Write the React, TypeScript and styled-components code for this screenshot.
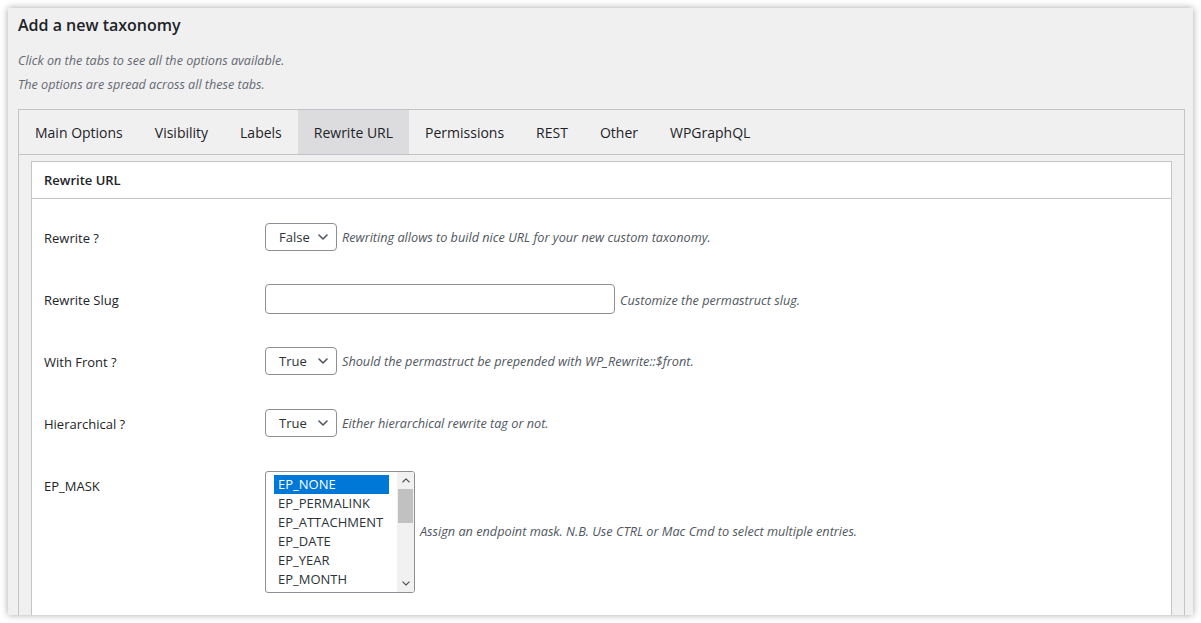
import React from "react";
import styled, { createGlobalStyle } from "styled-components";

const Global = createGlobalStyle`
  html, body { margin: 0; padding: 0; background: #ffffff; }
  body { font-family: "Open Sans", "Noto Sans", Arial, sans-serif; color: #1d2327; }
  * { box-sizing: border-box; }
`;

const Card = styled.div`
  margin: 8px;
  height: 607px;
  background: #f0f0f1;
  box-shadow: 0 0 7px rgba(0, 0, 0, 0.35);
  overflow: hidden;
  padding: 6px 8px 0 10px;
`;

const Title = styled.h2`
  margin: 0;
  font-size: 16px;
  line-height: 22px;
  font-weight: 600;
  color: #1d2327;
`;

const Intro = styled.p<{ $first?: boolean }>`
  margin: ${(p) => (p.$first ? "15px" : "4px")} 0 0;
  font-size: 12.6px;
  line-height: 20px;
  font-style: italic;
  color: #646970;
`;

const TabsBox = styled.div`
  margin-top: 14px;
  border: 1px solid #c3c4c7;
`;

const TabNav = styled.div`
  display: flex;
  height: 45px;
  border-bottom: 1px solid #c3c4c7;
`;

const Tab = styled.div<{ $active?: boolean }>`
  padding: 0 16px;
  height: 44px;
  display: flex;
  align-items: center;
  font-size: 14px;
  color: #1d2327;
  background: ${(p) => (p.$active ? "#dcdcde" : "transparent")};
`;

const TabBody = styled.div`
  padding: 6px 12px 40px;
`;

const Panel = styled.div`
  background: #ffffff;
  border: 1px solid #c3c4c7;
  padding-bottom: 60px;
`;

const PanelHeader = styled.div`
  height: 37px;
  border-bottom: 1px solid #c3c4c7;
  padding: 0 12px;
  display: flex;
  align-items: center;
  font-size: 13px;
  font-weight: 600;
  color: #1d2327;
`;

const Table = styled.div`
  padding: 9px 12px 0;
`;

const Row = styled.div`
  display: grid;
  grid-template-columns: 221px 1fr;
  align-items: start;
  min-height: 62px;
  padding-top: 15px;
`;

const Label = styled.div`
  margin-top: 5px;
  font-size: 13px;
  line-height: 20px;
  color: #1d2327;
`;

const Field = styled.div`
  display: flex;
  align-items: center;
  gap: 5px;
`;

const Select = styled.div`
  width: 72px;
  height: 28px;
  border: 1px solid #8c8f94;
  border-radius: 4px;
  background: #fff;
  display: flex;
  align-items: center;
  justify-content: space-between;
  padding: 0 8px 0 13px;
  font-size: 13px;
  color: #2c3338;
`;

const TextInput = styled.input`
  width: 350px;
  height: 30px;
  border: 1px solid #8c8f94;
  border-radius: 4px;
  background: #fff;
  padding: 0 8px;
  font-family: inherit;
  font-size: 13px;
  margin-top: -1px;
`;

const Desc = styled.span<{ $lift?: boolean }>`
  font-size: 12.7px;
  font-style: italic;
  color: #50575e;
  white-space: nowrap;
  margin-top: ${(p) => (p.$lift ? "-3px" : "0")};
`;

const ListBox = styled.div`
  width: 150px;
  height: 122px;
  border: 1px solid #8c8f94;
  border-radius: 3px;
  background: #fff;
  display: flex;
  overflow: hidden;
`;

const Options = styled.div`
  flex: 1;
  padding: 3px 8px 0 8px;
  overflow: hidden;
`;

const Option = styled.div<{ $selected?: boolean }>`
  height: 19px;
  line-height: 19px;
  padding: 0 4px;
  font-size: 13px;
  white-space: nowrap;
  color: ${(p) => (p.$selected ? "#ffffff" : "#2c3338")};
  background: ${(p) => (p.$selected ? "#0078d7" : "transparent")};
`;

const Scrollbar = styled.div`
  width: 17px;
  background: #f1f1f1;
  display: flex;
  flex-direction: column;
  align-items: center;
`;

const ScrollArrow = styled.div`
  height: 17px;
  width: 17px;
  display: flex;
  align-items: center;
  justify-content: center;
`;

const Thumb = styled.div`
  width: 15px;
  height: 34px;
  background: #c1c1c1;
`;

const ScrollTrack = styled.div`
  flex: 1;
  width: 100%;
  display: flex;
  justify-content: center;
`;

const Chevron = ({ up, size = 10, color = "#50575e", sw = 1.6 }: { up?: boolean; size?: number; color?: string; sw?: number }) => (
  <svg width={size} height={size * 0.6} viewBox="0 0 10 6" fill="none">
    <path
      d={up ? "M1 5 L5 1 L9 5" : "M1 1 L5 5 L9 1"}
      stroke={color}
      strokeWidth={sw}
      strokeLinecap="round"
      strokeLinejoin="round"
    />
  </svg>
);

const tabs = ["Main Options", "Visibility", "Labels", "Rewrite URL", "Permissions", "REST", "Other", "WPGraphQL"];
const epOptions = ["EP_NONE", "EP_PERMALINK", "EP_ATTACHMENT", "EP_DATE", "EP_YEAR", "EP_MONTH"];

const SelectRow = ({ label, value, desc }: { label: string; value: string; desc: string }) => (
  <Row>
    <Label>{label}</Label>
    <Field>
      <Select>
        <span>{value}</span>
        <Chevron />
      </Select>
      <Desc>{desc}</Desc>
    </Field>
  </Row>
);

export default function App() {
  return (
    <>
      <Global />
      <Card>
        <Title>Add a new taxonomy</Title>
        <Intro $first>Click on the tabs to see all the options available.</Intro>
        <Intro>The options are spread across all these tabs.</Intro>
        <TabsBox>
          <TabNav>
            {tabs.map((t) => (
              <Tab key={t} $active={t === "Rewrite URL"}>
                {t}
              </Tab>
            ))}
          </TabNav>
          <TabBody>
            <Panel>
              <PanelHeader>Rewrite URL</PanelHeader>
              <Table>
                <SelectRow label="Rewrite ?" value="False" desc="Rewriting allows to build nice URL for your new custom taxonomy." />
                <Row>
                  <Label>Rewrite Slug</Label>
                  <Field>
                    <TextInput type="text" />
                    <Desc>Customize the permastruct slug.</Desc>
                  </Field>
                </Row>
                <SelectRow label="With Front ?" value="True" desc="Should the permastruct be prepended with WP_Rewrite::$front." />
                <SelectRow label="Hierarchical ?" value="True" desc="Either hierarchical rewrite tag or not." />
                <Row>
                  <Label>EP_MASK</Label>
                  <Field>
                    <ListBox>
                      <Options>
                        {epOptions.map((o, i) => (
                          <Option key={o} $selected={i === 0}>
                            {o}
                          </Option>
                        ))}
                      </Options>
                      <Scrollbar>
                        <ScrollArrow>
                          <Chevron up size={8} color="#505050" sw={1.4} />
                        </ScrollArrow>
                        <ScrollTrack>
                          <Thumb />
                        </ScrollTrack>
                        <ScrollArrow>
                          <Chevron size={8} color="#505050" sw={1.4} />
                        </ScrollArrow>
                      </Scrollbar>
                    </ListBox>
                    <Desc $lift>Assign an endpoint mask. N.B. Use CTRL or Mac Cmd to select multiple entries.</Desc>
                  </Field>
                </Row>
              </Table>
            </Panel>
          </TabBody>
        </TabsBox>
      </Card>
    </>
  );
}
